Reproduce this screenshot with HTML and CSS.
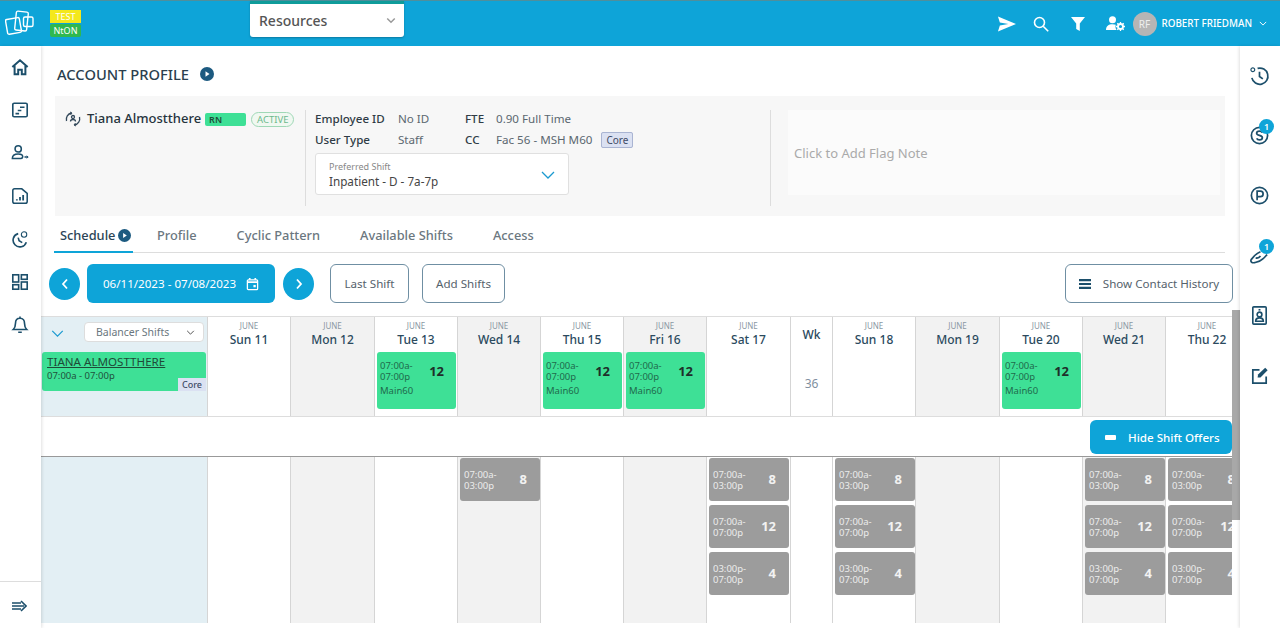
FILE: index.html
```html
<!DOCTYPE html>
<html lang="en">
<head>
<meta charset="UTF-8">
<title>Account Profile</title>
<link rel="stylesheet" href="styles.css">
</head>
<body>
	<header class="topbar">
		<svg class="logo" viewBox="0 0 30 26" fill="none" stroke="#fff" stroke-width="1.4"><rect x="1.500" y="8.500" width="14" height="15" rx="1.500" transform="rotate(-10 8 16)"/><rect x="10.500" y="1.500" width="12" height="19" rx="1.500" transform="rotate(6 16 11)"/><rect x="18.500" y="7" width="9.500" height="9.500" rx="1.500"/></svg>
		<div class="env">
			<span class="env-test">TEST</span>
			<span class="env-on">NtON</span>
		</div>
		<div class="module-select">
			<span>Resources</span>
			<svg class="chev" viewBox="0 0 12 8" fill="none" stroke="#999" stroke-width="1.8"><path d="M1.500 1.500 6 6l4.500-4.500"/></svg>
		</div>
		<div class="top-actions">
			<svg class="ic-send" viewBox="0 0 20 16" fill="#fff"><path d="M1 0 20 8 1 16l2-6.500L12 8 3 6.500z"/></svg>
			<svg class="ic-search" viewBox="0 0 16 16" fill="none" stroke="#fff" stroke-width="1.600"><circle cx="6.500" cy="6.500" r="5"/><path d="m10.200 10.200 5 5"/></svg>
			<svg class="ic-filter" viewBox="0 0 14 14" fill="#fff"><path d="M0 0h14L8.800 6.500V14L5.200 12V6.500z"/></svg>
			<svg class="ic-usergear" viewBox="0 0 19 15" fill="#fff"><circle cx="6.500" cy="3.800" r="3.500"/><path d="M0 14c0-4 2.500-5.800 6.500-5.800 1.300 0 2.400.2 3.300.6-.6 1.600-.4 3.700.8 5.200z"/><circle cx="14.500" cy="10.500" r="2.500" fill="none" stroke="#fff" stroke-width="1.800"/><path d="M14.500 6v2M14.500 13v2M10 10.500h2M17 10.500h2M11.300 7.300l1.400 1.400M16.300 12.300l1.400 1.400M17.700 7.300l-1.400 1.400M12.700 12.300l-1.400 1.400" stroke="#fff" stroke-width="1.300"/></svg>
			<span class="avatar">RF</span>
			<span class="user-name">ROBERT FRIEDMAN</span>
			<svg class="user-chev" viewBox="0 0 10 6" fill="none" stroke="#fff" stroke-width="1.200"><path d="m1 1 4 4 4-4"/></svg>
		</div>
	</header>

	<div class="shell">
		<nav class="rail-left">
			<div class="rail-icons">
				<svg viewBox="0 0 20 20" fill="none" stroke="#1c4f6b" stroke-width="2.200"><path d="M1.500 10 10 2.500l8.500 7.500M4 8.500V18h4v-5h4v5h4V8.500"/></svg>
				<svg viewBox="0 0 20 20" fill="none" stroke="#1c4f6b" stroke-width="1.800"><rect x="2" y="2.500" width="16" height="15" rx="1.500"/><path d="M5 14h4M7.500 10.500h4M10 7h5"/></svg>
				<svg viewBox="0 0 20 20" fill="none" stroke="#1c4f6b" stroke-width="1.700"><circle cx="8" cy="5.500" r="3.500"/><path d="M1.500 16c0-4 3-5 6.500-5s5 1.500 5 3-1 2-2 2zM15 14.500h4"/><path d="m17.500 13 1.500 1.500-1.500 1.500" stroke-width="1"/></svg>
				<svg viewBox="0 0 20 20" fill="none" stroke="#1c4f6b" stroke-width="1.700"><path d="M2 4q0-2 2-2h8l6 5v9q0 2-2 2H4q-2 0-2-2z"/><path d="M6.500 15v-1.500M10 15v-4M13.500 15V9" stroke-width="2"/></svg>
				<svg viewBox="0 0 20 20" fill="none" stroke="#1c4f6b" stroke-width="1.800"><path d="M8 4a7.500 7.500 0 1 0 9 9.500"/><path d="M8 8.500 9 12l3.500 2"/><circle cx="14.500" cy="5" r="3" stroke-width="1.200"/></svg>
				<svg viewBox="0 0 20 20" fill="none" stroke="#1c4f6b" stroke-width="1.800"><rect x="2" y="2" width="6.500" height="8"/><rect x="11.500" y="2" width="6.500" height="5"/><rect x="2" y="13" width="6.500" height="5"/><rect x="11.500" y="10" width="6.500" height="8"/></svg>
				<svg viewBox="0 0 20 20" fill="none" stroke="#1c4f6b" stroke-width="1.800"><path d="M10 2.500c-3.500 0-5 2.500-5 5.500 0 4-1.500 6-2.500 7h15c-1-1-2.500-3-2.500-7 0-3-1.500-5.500-5-5.500zM10 .5v2M8 18h4"/></svg>
			</div>
			<div class="rail-foot">
				<svg viewBox="0 0 16 12" fill="none" stroke="#1c4f6b" stroke-width="1.600"><path d="M1 3h9M1 6h12M1 9h9M10 1l5 5-5 5"/></svg>
			</div>
		</nav>

		<main class="content">
			<div class="page-head">
				<h1>ACCOUNT PROFILE</h1>
				<svg class="play" viewBox="0 0 14 14"><circle cx="7" cy="7" r="7" fill="#1c5a80"/><path d="M5.500 4.200 9.500 7l-4 2.800z" fill="#fff"/></svg>
			</div>

			<section class="profile-card">
				<div class="person">
					<svg class="sync" viewBox="0 0 16 16" fill="none" stroke="#33485a" stroke-width="1.300"><path d="M1.500 10a6.500 6.500 0 0 1 5-8M14.500 6a6.500 6.500 0 0 1-5 8"/><path d="m5 1 2 1-1.500 2M11 15l-2-1 1.500-2" stroke-width="1"/><circle cx="8" cy="6" r="1.500"/><path d="M5.500 10.500c0-1.500 1-2 2.500-2s2.500.5 2.500 2"/></svg>
					<span class="person-name">Tiana Almostthere</span>
					<span class="tag-rn">RN</span>
					<span class="tag-active">ACTIVE</span>
				</div>
				<div class="details">
					<div class="detail-grid">
						<b>Employee ID</b><span>No ID</span><b>FTE</b><span>0.90 Full Time</span>
						<b>User Type</b><span>Staff</span><b>CC</b><span class="cc">Fac 56 - MSH M60 <em class="tag-core">Core</em></span>
					</div>
					<div class="pref-select">
						<div>
							<label>Preferred Shift</label>
							<p>Inpatient - D - 7a-7p</p>
						</div>
						<svg viewBox="0 0 14 8" fill="none" stroke="#1b9ad0" stroke-width="1.300"><path d="m1 1 6 6 6-6"/></svg>
					</div>
				</div>
				<div class="flag-wrap">
					<div class="flag-note">Click to Add Flag Note</div>
				</div>
			</section>

			<div class="tabs">
				<a class="tab active">Schedule <svg class="play-sm" viewBox="0 0 14 14"><circle cx="7" cy="7" r="7" fill="#1c5a80"/><path d="M5.500 4.200 9.500 7l-4 2.800z" fill="#fff"/></svg></a>
				<a class="tab">Profile</a>
				<a class="tab">Cyclic Pattern</a>
				<a class="tab">Available Shifts</a>
				<a class="tab">Access</a>
			</div>

			<div class="toolbar">
				<button class="round"><svg viewBox="0 0 8 12" fill="none" stroke="#fff" stroke-width="1.800"><path d="M6 1.500 2 6l4 4.500"/></svg></button>
				<button class="date-btn">06/11/2023 - 07/08/2023
					<svg viewBox="0 0 14 14" fill="none" stroke="#fff" stroke-width="1.400"><rect x="1.500" y="2.500" width="11" height="10.500" rx="1"/><path d="M1.500 5h11M4 .5v2M10 .5v2" stroke-width="1.800"/><rect x="8" y="8" width="2.500" height="2.500" fill="#fff" stroke="none"/></svg>
				</button>
				<button class="round"><svg viewBox="0 0 8 12" fill="none" stroke="#fff" stroke-width="1.800"><path d="M2 1.500 6 6l-4 4.500"/></svg></button>
				<button class="ghost last-shift">Last Shift</button>
				<button class="ghost add-shifts">Add Shifts</button>
				<button class="ghost history">
					<svg viewBox="0 0 12 10" fill="#1c4f6b"><path d="M0 0h12v2.200H0zM0 3.900h12v2.200H0zM0 7.800h12V10H0z"/></svg>
					Show Contact History
				</button>
			</div>

			<div class="sched-wrap">
				<div class="sched">
					<div class="cols row-top">
						<div class="cell-side">
							<div class="side-head">
								<svg class="side-chev" viewBox="0 0 14 8" fill="none" stroke="#1b9ad0" stroke-width="1.400"><path d="m1 1 6 6 6-6"/></svg>
								<div class="balancer">Balancer Shifts
									<svg viewBox="0 0 10 6" fill="none" stroke="#555" stroke-width="1.200"><path d="m1 1 4 4 4-4"/></svg>
								</div>
							</div>
							<div class="emp-card">
								<a>TIANA ALMOSTTHERE</a>
								<p>07:00a - 07:00p</p>
								<span class="emp-core">Core</span>
							</div>
						</div>
						<div class="day"><small>JUNE</small><b>Sun 11</b></div>
						<div class="day shade"><small>JUNE</small><b>Mon 12</b></div>
						<div class="day"><small>JUNE</small><b>Tue 13</b>
							<div class="shift"><div><p>07:00a-<br>07:00p</p><p class="unit">Main60</p></div><strong>12</strong></div>
						</div>
						<div class="day shade"><small>JUNE</small><b>Wed 14</b></div>
						<div class="day"><small>JUNE</small><b>Thu 15</b>
							<div class="shift"><div><p>07:00a-<br>07:00p</p><p class="unit">Main60</p></div><strong>12</strong></div>
						</div>
						<div class="day shade"><small>JUNE</small><b>Fri 16</b>
							<div class="shift"><div><p>07:00a-<br>07:00p</p><p class="unit">Main60</p></div><strong>12</strong></div>
						</div>
						<div class="day"><small>JUNE</small><b>Sat 17</b></div>
						<div class="day wk"><b>Wk</b><span>36</span></div>
						<div class="day"><small>JUNE</small><b>Sun 18</b></div>
						<div class="day shade"><small>JUNE</small><b>Mon 19</b></div>
						<div class="day"><small>JUNE</small><b>Tue 20</b>
							<div class="shift"><div><p>07:00a-<br>07:00p</p><p class="unit">Main60</p></div><strong>12</strong></div>
						</div>
						<div class="day shade"><small>JUNE</small><b>Wed 21</b></div>
						<div class="day"><small>JUNE</small><b>Thu 22</b></div>
					</div>

					<div class="offers-band">
						<button class="hide-offers"><i></i>Hide Shift Offers</button>
					</div>

					<div class="cols row-offers">
						<div class="cell-side"></div>
						<div class="slot"></div>
						<div class="slot shade"></div>
						<div class="slot"></div>
						<div class="slot shade">
							<div class="offer"><p>07:00a-<br>03:00p</p><strong>8</strong></div>
						</div>
						<div class="slot"></div>
						<div class="slot shade"></div>
						<div class="slot">
							<div class="offer"><p>07:00a-<br>03:00p</p><strong>8</strong></div>
							<div class="offer"><p>07:00a-<br>07:00p</p><strong>12</strong></div>
							<div class="offer"><p>03:00p-<br>07:00p</p><strong>4</strong></div>
						</div>
						<div class="slot"></div>
						<div class="slot">
							<div class="offer"><p>07:00a-<br>03:00p</p><strong>8</strong></div>
							<div class="offer"><p>07:00a-<br>07:00p</p><strong>12</strong></div>
							<div class="offer"><p>03:00p-<br>07:00p</p><strong>4</strong></div>
						</div>
						<div class="slot shade"></div>
						<div class="slot"></div>
						<div class="slot shade">
							<div class="offer"><p>07:00a-<br>03:00p</p><strong>8</strong></div>
							<div class="offer"><p>07:00a-<br>07:00p</p><strong>12</strong></div>
							<div class="offer"><p>03:00p-<br>07:00p</p><strong>4</strong></div>
						</div>
						<div class="slot">
							<div class="offer"><p>07:00a-<br>03:00p</p><strong>8</strong></div>
							<div class="offer"><p>07:00a-<br>07:00p</p><strong>12</strong></div>
							<div class="offer"><p>03:00p-<br>07:00p</p><strong>4</strong></div>
						</div>
					</div>
				</div>
				<div class="scrollbar"><div class="thumb"></div></div>
			</div>
		</main>

		<aside class="rail-right">
			<svg viewBox="0 0 22 22" fill="none" stroke="#1c4f6b" stroke-width="1.800"><path d="M9 3.500a8.500 8.500 0 1 1-6 10"/><path d="M11 7v5l3.500 2.500"/><circle cx="4" cy="5" r="2" stroke-width="1.200"/></svg>
			<div class="rail-item">
				<svg viewBox="0 0 22 22" fill="none" stroke="#1c4f6b" stroke-width="1.800"><circle cx="11" cy="11" r="8.500"/><path d="M14 8c-.5-1-1.500-1.500-3-1.500-2 0-3 1-3 2.200 0 3 6 1.500 6 4.600 0 1.200-1 2.200-3 2.200-1.500 0-2.500-.5-3-1.500"/></svg>
				<span class="badge">1</span>
			</div>
			<svg viewBox="0 0 22 22" fill="none" stroke="#1c4f6b" stroke-width="1.800"><circle cx="11" cy="11" r="8.500"/><path d="M8.500 16V6.500H12a2.800 2.800 0 0 1 0 5.600H8.500"/></svg>
			<div class="rail-item">
				<svg viewBox="0 0 22 22" fill="none" stroke="#1c4f6b" stroke-width="1.800"><path d="M6 11 2.500 15c-1 1.500-.5 3 1 3.500 1 .3 2 0 3-.2 3-.7 6-1.800 8-3.800 1.800-1.500 3-3 4.500-4.500M6 11c1.500-1.500 3.500-3 6-4M7 13.500c2 .5 4-.5 5-2"/></svg>
				<span class="badge">1</span>
			</div>
			<svg viewBox="0 0 22 22" fill="none" stroke="#1c4f6b" stroke-width="1.700"><rect x="4" y="2" width="14" height="18" rx="1"/><path d="M10 5h2"/><circle cx="11" cy="10" r="2.500"/><path d="M7 17c0-2.500 1.500-3.500 4-3.500s4 1 4 3.500z"/></svg>
			<svg viewBox="0 0 22 22" fill="none" stroke="#1c4f6b" stroke-width="1.800"><path d="M11 5H4v14h14v-7"/><path d="m9 13 .5-3L17 3l2.500 2.500L12 13z" fill="#1c4f6b" stroke="none"/></svg>
		</aside>
	</div>
</body>
</html>
```

FILE: styles.css
```css
* { margin: 0; padding: 0; box-sizing: border-box; }
html, body { height: 100%; overflow: hidden; }
body {
	display: flex;
	flex-direction: column;
	font-family: "Noto Sans", "Open Sans", "Liberation Sans", sans-serif;
	font-size: 11.600px;
	color: #44525e;
	background: #fff;
}
button { font-family: inherit; cursor: pointer; }

/* top bar */
.topbar {
	height: 46px;
	flex: none;
	display: flex;
	align-items: flex-start;
	background: #0ea4d8;
	border-top: 1px solid #4f8f9c;
}
.logo { width: 30px; height: 26px; margin: 9px 0 0 5px; }
.env { width: 31px; margin: 9px 0 0 15px; display: flex; flex-direction: column; gap: 1px; font-size: 9px; line-height: 13px; text-align: center; color: #fff; }
.env-test { background: #f4e81c; }
.env-on { background: #2fb84f; border-radius: 2px; }
.module-select {
	width: 154px;
	height: 36px;
	margin-left: 169px;
	padding: 0 8px 0 9px;
	display: flex;
	align-items: center;
	justify-content: space-between;
	background: #fff;
	border-top: 3px solid #0f9c9a;
	border-radius: 0 0 3px 3px;
	box-shadow: 0 1px 2px rgba(0,0,0,.25);
	font-size: 14px;
	font-weight: 500;
	color: #555;
}
.chev { width: 10px; height: 7px; }
.top-actions { margin-left: auto; height: 45px; display: flex; align-items: center; padding-right: 13px; }
.ic-send { width: 19px; height: 16px; }
.ic-search { width: 16px; height: 16px; margin-left: 17px; }
.ic-filter { width: 14px; height: 14px; margin-left: 22px; }
.ic-usergear { width: 19px; height: 15px; margin-left: 21px; }
.avatar { width: 24px; height: 24px; margin-left: 8px; border-radius: 50%; background: #b5b5b5; color: #eee; font-size: 10px; line-height: 24px; text-align: center; }
.user-name { margin-left: 5px; font-size: 9.800px; font-weight: 500; color: #fff; }
.user-chev { width: 8px; height: 5px; margin-left: 7px; }

.shell { flex: 1; min-height: 0; display: flex; }

/* rails */
.rail-left {
	width: 41px;
	flex: none;
	display: flex;
	flex-direction: column;
	justify-content: space-between;
	box-shadow: 1px 0 3px rgba(0,0,0,.12);
	z-index: 2;
}
.rail-icons { padding: 12px 0 0 11px; display: flex; flex-direction: column; gap: 25px; }
.rail-icons svg { width: 18px; height: 18px; }
.rail-foot { height: 47px; padding: 18px 0 0 11px; border-top: 1px solid #ddd; }
.rail-foot svg { width: 16px; height: 12px; display: block; }
.rail-right {
	width: 40px;
	flex: none;
	padding: 19px 0 0 9px;
	display: flex;
	flex-direction: column;
	gap: 39px;
	box-shadow: -1px 0 3px rgba(0,0,0,.12);
	z-index: 2;
}
.rail-right svg { width: 21px; height: 21px; display: block; }
.rail-item { position: relative; height: 21px; }
.badge { position: absolute; top: -6px; left: 10px; width: 15px; height: 15px; border-radius: 50%; background: #0ea4d8; color: #fff; font-size: 9px; font-weight: 600; line-height: 15px; text-align: center; }

.content { flex: 1; min-width: 0; display: flex; flex-direction: column; }

.page-head { height: 50px; padding: 6px 0 0 16px; display: flex; align-items: center; gap: 11px; }
.page-head h1 { font-size: 14.700px; font-weight: 500; color: #2b3f4e; }
.play { width: 14px; height: 14px; }

/* profile card */
.profile-card {
	height: 120px;
	margin: 0 15px 0 14px;
	padding: 14px 5px 0 10px;
	display: flex;
	background: #f7f7f7;
}
.person { width: 240px; display: flex; align-items: flex-start; font-size: 13px; }
.sync { width: 16px; height: 16px; margin: 1px 6px 0 0; }
.person-name { font-weight: 500; color: #26333d; line-height: 17px; white-space: nowrap; }
.tag-rn { width: 41px; height: 13px; margin: 3px 0 0 4px; padding-left: 4px; flex: none; background: #3ee096; border-radius: 2px; font-size: 9px; font-weight: 600; line-height: 14px; color: #1f4a38; }
.tag-active { height: 15px; margin: 2px 0 0 5px; padding: 0 5px; flex: none; border: 1px solid #9fd8b6; border-radius: 8px; font-size: 9.500px; line-height: 13px; color: #6cb98c; background: #f0f8f1; }
.details { width: 465px; padding-left: 9px; border-left: 1px solid #ddd; height: 96px; }
.detail-grid { display: grid; grid-template-columns: 83px 67px 31px auto; grid-auto-rows: 21px; align-items: center; margin-top: -2px; }
.detail-grid b { font-weight: 500; color: #2f3c46; }
.detail-grid span { color: #5b6770; }
.tag-core { margin-left: 6px; padding: 0 4px; background: #dbe1f2; border: 1px solid #a9b4d2; border-radius: 2px; font-size: 10px; font-style: normal; color: #3f4c66; }
.pref-select {
	width: 254px;
	height: 42px;
	margin-top: 3px;
	padding: 7px 13px 5px;
	display: flex;
	align-items: center;
	justify-content: space-between;
	background: #fff;
	border: 1px solid #e0e0e0;
	border-radius: 3px;
}
.pref-select label { display: block; font-size: 9px; line-height: 12px; color: #888; }
.pref-select p { font-size: 11.700px; line-height: 17px; color: #444; }
.pref-select svg { width: 14px; height: 8px; }
.flag-wrap { flex: 1; height: 96px; padding-left: 17px; border-left: 1px solid #ddd; }
.flag-note { height: 85px; padding-left: 6px; display: flex; align-items: center; background: #fbfbfb; font-size: 13px; color: #aaa; }

/* tabs */
.tabs { height: 37px; margin: 0 15px 0 13px; display: flex; border-bottom: 1px solid #ddd; }
.tab { height: 37px; padding: 10px 0 0; font-size: 12.800px; font-weight: 500; color: #6b7780; margin-right: 40px; white-space: nowrap; }
.tab.active { width: 79px; margin-right: 24px; padding-left: 6px; color: #2b4456; border-bottom: 2px solid #0ea4d8; display: flex; align-items: flex-start; gap: 3px; }
.play-sm { width: 13px; height: 13px; margin-top: 3px; flex: none; }

/* toolbar */
.toolbar { height: 39px; margin: 11px 7px 13px 8px; display: flex; align-items: center; }
.round { width: 31px; height: 32px; border: 0; border-radius: 50%; background: #0ea4d8; display: flex; align-items: center; justify-content: center; }
.round svg { width: 8px; height: 12px; }
.date-btn {
	width: 188px;
	height: 39px;
	margin: 0 8px 0 7px;
	display: flex;
	align-items: center;
	justify-content: center;
	gap: 10px;
	border: 0;
	border-radius: 6px;
	background: #0ea4d8;
	color: #fff;
	font-size: 11.600px;
}
.date-btn svg { width: 13px; height: 14px; }
.ghost { height: 39px; border: 1px solid #6f8fa3; border-radius: 6px; background: #fff; color: #55626c; font-size: 11.600px; }
.last-shift { width: 79px; margin-left: 16px; }
.add-shifts { width: 83px; margin-left: 13px; }
.history { width: 168px; margin-left: auto; display: flex; align-items: center; justify-content: center; gap: 12px; }
.history svg { width: 12px; height: 10px; }

/* schedule grid */
.sched-wrap { flex: 1; min-height: 0; display: flex; }
.sched { width: 1191px; overflow: hidden; border-top: 1px solid #ddd; }
.cols { display: grid; grid-template-columns: 167px 83px 84px 83px 83px 83px 83px 84px 42px 83px 84px 83px 83px 83px; }
.row-top { height: 99px; }
.row-offers { height: 166px; }
.cell-side { background: #e3eff4; border-right: 1px solid #d5d5d5; }
.side-head { height: 35px; padding: 5px 3px 0 10px; display: flex; align-items: flex-start; justify-content: space-between; }
.side-chev { width: 13px; height: 7px; margin-top: 8px; }
.balancer {
	width: 120px;
	height: 20px;
	padding: 0 8px 0 11px;
	display: flex;
	align-items: center;
	justify-content: space-between;
	background: #fff;
	border: 1px solid #ddd;
	border-radius: 4px;
	font-size: 10.500px;
	color: #6b7780;
}
.balancer svg { width: 9px; height: 5px; }
.emp-card { position: relative; height: 39px; margin: 0 1px; padding: 2px 5px; background: #3ee096; border-radius: 3px; color: #20503c; }
.emp-card a { display: block; font-size: 11.600px; line-height: 16px; color: #1f4a38; text-decoration: underline; }
.emp-card p { font-size: 9.500px; line-height: 11px; }
.emp-core { position: absolute; right: 0; bottom: 0; width: 28px; height: 13px; background: #dbe1f2; font-size: 9px; font-weight: 500; line-height: 13px; text-align: center; color: #3f4c66; }

.day { padding: 3px 0 0 2px; border-right: 1px solid #d5d5d5; text-align: center; }
.day small { display: block; margin-right: 2px; font-size: 8px; line-height: 11px; color: #8a98a3; }
.day b { display: block; margin-right: 2px; height: 21px; font-size: 12px; font-weight: 500; line-height: 17px; color: #2b4a5e; }
.shade { background: #f2f2f2; }
.wk b { margin-top: 6px; height: 27px; }
.wk span { display: block; margin-top: 22px; margin-right: 2px; font-size: 12px; color: #8190a0; }
.shift {
	width: 79px;
	height: 57px;
	padding: 8px 12px 0 3px;
	display: flex;
	justify-content: space-between;
	background: #3ee096;
	border-radius: 3px;
	text-align: left;
	font-size: 9.500px;
	line-height: 11px;
	color: #1f6a4c;
}
.shift .unit { margin-top: 3px; }
.shift strong { margin-top: 3px; font-size: 13px; line-height: 16px; font-weight: 700; color: #1f2f2a; }

.offers-band { height: 41px; display: flex; justify-content: flex-end; align-items: flex-start; padding-top: 3px; border-top: 1px solid #ddd; border-bottom: 1px solid #999; }
.hide-offers { width: 142px; height: 34px; display: flex; align-items: center; gap: 12px; padding-left: 15px; border: 0; border-radius: 6px; background: #0ea4d8; color: #fff; font-size: 11.600px; font-weight: 500; }
.hide-offers i { width: 11px; height: 5px; background: #fff; border-radius: 1px; }

.slot { padding: 1px 0 0 2px; border-right: 1px solid #d5d5d5; display: flex; flex-direction: column; gap: 4px; }
.offer {
	height: 43px;
	width: 80px;
	flex: none;
	padding: 0 13px 0 4px;
	display: flex;
	align-items: center;
	justify-content: space-between;
	background: #9c9c9c;
	border-radius: 3px;
	font-size: 9.500px;
	line-height: 11px;
	color: #ececec;
}
.offer strong { font-size: 13px; font-weight: 700; color: #f2f2f2; }

.scrollbar { width: 8px; flex: none; margin-top: -6px; }
.thumb { height: 210px; background: #a8a8a8; }
```
